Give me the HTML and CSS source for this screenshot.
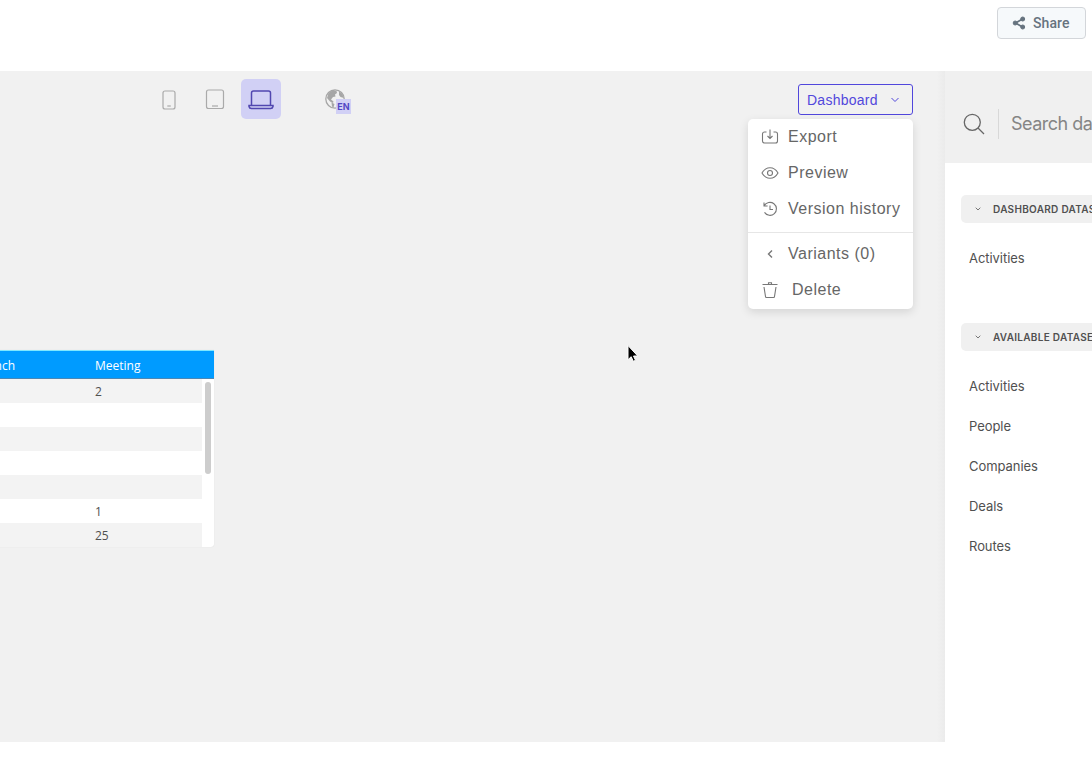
FILE: index.html
```
<!DOCTYPE html>
<html lang="en">
    <head>
        <meta charset="UTF-8">
        <title>Dashboard editor</title>
        <link rel="stylesheet" href="styles.css">
    </head>
    <body>
        <header class="topbar">
            <button class="share">
                <svg width="14" height="14" viewBox="0 0 14 14" fill="currentColor" stroke="currentColor">
                    <path d="M10.5 3 3.5 7l7 4" fill="none" stroke-width="1.6"/>
                    <circle cx="10.7" cy="3" r="2"/>
                    <circle cx="3.2" cy="7" r="2"/>
                    <circle cx="10.7" cy="11" r="2"/>
                </svg>
                <span>Share</span>
            </button>
        </header>

        <div class="workspace">
            <main class="canvas">
                <div class="toolbar">
                    <div class="devices">
                        <button class="device">
                            <svg width="40" height="40" viewBox="0 0 40 40">
                                <rect x="14" y="12" width="12" height="18" rx="2"/>
                                <path d="M18.3 27h3.5"/>
                            </svg>
                        </button>
                        <button class="device">
                            <svg width="40" height="40" viewBox="0 0 40 40">
                                <rect x="11.5" y="11" width="17" height="18.500" rx="2"/>
                                <path d="M17 27h6"/>
                            </svg>
                        </button>
                        <button class="device active">
                            <svg width="40" height="40" viewBox="0 0 40 40">
                                <path d="M10.500 26.500V14a2 2 0 0 1 2-2h15a2 2 0 0 1 2 2v12.500"/>
                                <path d="M8 26.500h24v1a2.500 2.500 0 0 1-2.500 2h-19a2.500 2.500 0 0 1-2.500-2z"/>
                            </svg>
                        </button>
                    </div>
                    <button class="language">
                        <svg width="20" height="20" viewBox="0 0 20 20">
                            <circle cx="10" cy="10" r="9.200" fill="none" stroke="#a6a6a6" stroke-width="1.300"/>
                            <path d="M3.500 4 8 1l3.500 1 .5 2-2 1.500.5 2-2.500.5-2 2.500 2.500 2-.5 1.500-3-1.500-3-3.500zM14 2.500l3 2 2 4.500-3.500-1-1.500-2zM6.500 13.500l3 1.500-1 3.500-1.500-1z" fill="#a6a6a6"/>
                        </svg>
                        <span class="lang-code">EN</span>
                    </button>
                    <div class="dropdown">
                        <button class="dropdown-toggle">
                            <span>Dashboard</span>
                            <svg width="10" height="6" viewBox="0 0 10 6"><path d="M1.500 1 5 4.500 8.500 1"/></svg>
                        </button>
                        <div class="menu">
                            <a class="menu-item">
                                <svg width="18" height="18" viewBox="0 0 18 18">
                                    <path d="M5.500 4H3.500a2 2 0 0 0-2 2v7a2 2 0 0 0 2 2h11a2 2 0 0 0 2-2V6a2 2 0 0 0-2-2h-2M9 1.500v9M6.500 8 9 10.500 11.500 8"/>
                                </svg>
                                <span>Export</span>
                            </a>
                            <a class="menu-item">
                                <svg width="18" height="18" viewBox="0 0 18 18">
                                    <path d="M1 9c4-7 12-7 16 0-4 7-12 7-16 0z"/>
                                    <circle cx="9" cy="9" r="2.500"/>
                                </svg>
                                <span>Preview</span>
                            </a>
                            <a class="menu-item">
                                <svg width="18" height="18" viewBox="0 0 18 18">
                                    <path d="M3.200 5.800a6.500 6.500 0 1 1 .3 6.600M3 2.500v3.500h3.600M9 5.500V9.500h3"/>
                                </svg>
                                <span>Version history</span>
                            </a>
                            <hr class="menu-divider">
                            <a class="menu-item">
                                <svg width="18" height="18" viewBox="0 0 18 18"><path d="M11 5.500 7.500 9l3.500 3.500" stroke-width="1.400"/></svg>
                                <span>Variants (0)</span>
                            </a>
                            <a class="menu-item delete">
                                <svg width="18" height="18" viewBox="0 0 18 18">
                                    <path d="M1.500 3.500h15M7.500 3.500V1.700h3v1.800M3 6l1.500 9.500a1 1 0 0 0 1 1h7a1 1 0 0 0 1-1L15 6"/>
                                </svg>
                                <span>Delete</span>
                            </a>
                        </div>
                    </div>
                </div>

                <div class="table">
                    <div class="table-head">
                        <span class="col-first">Lunch</span>
                        <span>Meeting</span>
                    </div>
                    <div class="table-body">
                        <div class="rows">
                            <div class="row">2</div>
                            <div class="row"></div>
                            <div class="row"></div>
                            <div class="row"></div>
                            <div class="row"></div>
                            <div class="row">1</div>
                            <div class="row">25</div>
                        </div>
                        <div class="scrollbar"></div>
                    </div>
                </div>

                <svg class="cursor" width="14" height="20" viewBox="0 0 14 20">
                    <path d="M2 1.500v14.200l3.200-3 2.100 4.600 2.200-1-2-4.300h4.200z" fill="#000" stroke="#fff"/>
                </svg>
            </main>

            <aside class="sidebar">
                <div class="search">
                    <svg width="22" height="22" viewBox="0 0 22 22">
                        <circle cx="9.300" cy="9.300" r="8"/>
                        <path d="m15 15 6 6"/>
                    </svg>
                    <span class="search-text">Search datasets</span>
                </div>
                <section class="group">
                    <h4 class="group-title">
                        <svg width="6" height="4" viewBox="0 0 6 4"><path d="M.7.700 3 3 5.300.700"/></svg>
                        <span>DASHBOARD DATASETS</span>
                    </h4>
                    <ul class="datasets">
                        <li>Activities</li>
                    </ul>
                </section>
                <section class="group">
                    <h4 class="group-title">
                        <svg width="6" height="4" viewBox="0 0 6 4"><path d="M.7.700 3 3 5.300.700"/></svg>
                        <span>AVAILABLE DATASETS</span>
                    </h4>
                    <ul class="datasets">
                        <li>Activities</li>
                        <li>People</li>
                        <li>Companies</li>
                        <li>Deals</li>
                        <li>Routes</li>
                    </ul>
                </section>
            </aside>
        </div>
    </body>
</html>
```
FILE: styles.css
```
*{
    box-sizing:border-box;
}

body{
    margin:0;
    width:1092px;
    height:762px;
    overflow:hidden;
    background-color:#fff;
    font-family:Inter, sans-serif;
    color:#505050;
}

button{
    border:none;
    background:none;
    padding:0;
    font:inherit;
}

svg{
    flex:none;
    display:block;
}

.topbar{
    height:71px;
    padding:7px 6px 0 0;
    display:flex;
    justify-content:flex-end;
    align-items:flex-start;
}

.share{
    width:89px;
    height:32px;
    display:flex;
    align-items:center;
    padding-left:14px;
    gap:7px;
    border:1px solid #d3d6da;
    border-radius:4px;
    background-color:#f6f9fb;
    color:#66737f;
    font-family:Roboto, sans-serif;
    font-size:14px;
    font-weight:500;
    letter-spacing:0.1px;
}

.workspace{
    display:flex;
    height:671px;
}

.canvas{
    position:relative;
    width:945px;
    flex:none;
    background:linear-gradient(to left, #ebebeb, #f1f1f1 8px);
}

.toolbar{
    display:flex;
    height:48px;
    padding:8px 32px 0 149px;
}

.devices{
    display:flex;
    gap:6px;
}

.device{
    width:40px;
    height:40px;
    border-radius:5px;
}

.device svg{
    fill:none;
    stroke:#aaa;
    stroke-width:1.2;
}

.device.active{
    background-color:#d1d0f5;
}

.device.active svg{
    stroke:#5147b0;
    stroke-width:1.5;
}

.language{
    position:relative;
    display:flex;
    width:26px;
    height:26px;
    margin:10px 0 0 44px;
}

.lang-code{
    position:absolute;
    right:0;
    bottom:1px;
    width:15px;
    height:15px;
    background-color:#d1d0f5;
    color:#5147c4;
    font-size:9px;
    line-height:15px;
    font-weight:700;
    text-align:center;
}

.dropdown{
    position:relative;
    margin:5px 0 0 auto;
    font-family:"Liberation Sans", sans-serif;
}

.dropdown-toggle{
    width:115px;
    height:31px;
    display:flex;
    align-items:center;
    justify-content:space-between;
    padding:0 12px 0 8px;
    border:1px solid #5147dc;
    border-radius:3px;
    color:#5147dc;
    font-size:14px;
    letter-spacing:0.25px;
}

.dropdown-toggle svg{
    fill:none;
    stroke:#5147dc;
    stroke-width:1;
}

.menu{
    position:absolute;
    top:35px;
    right:0;
    width:165px;
    height:190px;
    background-color:#fff;
    border-radius:5px;
    box-shadow:0 3px 10px rgba(0,0,0,0.12);
}

.menu-item{
    display:flex;
    align-items:center;
    height:36px;
    padding-left:13px;
    gap:9px;
    color:#666;
    font-size:16px;
    letter-spacing:0.5px;
    white-space:nowrap;
}

.menu-item svg{
    fill:none;
    stroke:#777;
    stroke-width:1.1;
}

.menu-item.delete{
    gap:13px;
}

.menu-divider{
    margin:5px 0 3px;
    border:none;
    border-top:1px solid #e6e6e6;
}

.table{
    width:214px;
    margin-top:231px;
    border-top:1px solid #7fe8ff;
    background-color:#fff;
    border-radius:0 0 3px 0;
    box-shadow:0 0 1px rgba(0,0,0,0.15);
    font-family:"Open Sans", sans-serif;
    font-size:12px;
}

.table-head{
    display:flex;
    align-items:center;
    height:28px;
    padding-top:2px;
    background-color:#009bff;
    border-bottom:1px solid #4c87b5;
    color:#fff;
    font-weight:500;
}

.col-first{
    display:flex;
    justify-content:flex-end;
    width:15px;
    margin-right:80px;
    overflow:hidden;
}

.table-body{
    display:flex;
    gap:3px;
}

.row{
    width:202px;
    height:24px;
    padding-left:95px;
    line-height:25px;
}

.row:nth-child(odd){
    background-color:#f3f3f3;
}

.scrollbar{
    width:6px;
    height:92px;
    margin-top:3px;
    border-radius:3px;
    background-color:#cdcdcd;
}

.cursor{
    position:absolute;
    left:626px;
    top:273px;
}

.sidebar{
    width:147px;
    flex:none;
    overflow:hidden;
    white-space:nowrap;
}

.search{
    display:flex;
    align-items:center;
    height:92px;
    padding:14px 0 0 18px;
    margin-bottom:32px;
    gap:13px;
    background-color:#f0f0f0;
    color:#858585;
    font-size:18px;
}

.search svg{
    fill:none;
    stroke:#666;
    stroke-width:1.3;
}

.search-text{
    padding-left:12px;
    border-left:1px solid #d8d8d8;
    line-height:30px;
    letter-spacing:-0.5px;
}

.group{
    padding-left:16px;
    margin-bottom:45px;
}

.group-title{
    display:flex;
    align-items:center;
    height:28px;
    margin:0;
    padding-left:14px;
    gap:12px;
    border-radius:5px 0 0 5px;
    background-color:#f0f0f0;
    font-size:10px;
    font-weight:600;
    letter-spacing:0.3px;
}

.group-title svg{
    fill:none;
    stroke:#777;
}

.datasets{
    list-style:none;
    margin:0;
    padding:15px 0 0 8px;
    font-size:13px;
    letter-spacing:-0.05px;
}

.datasets li{
    height:40px;
    line-height:41px;
}
```
